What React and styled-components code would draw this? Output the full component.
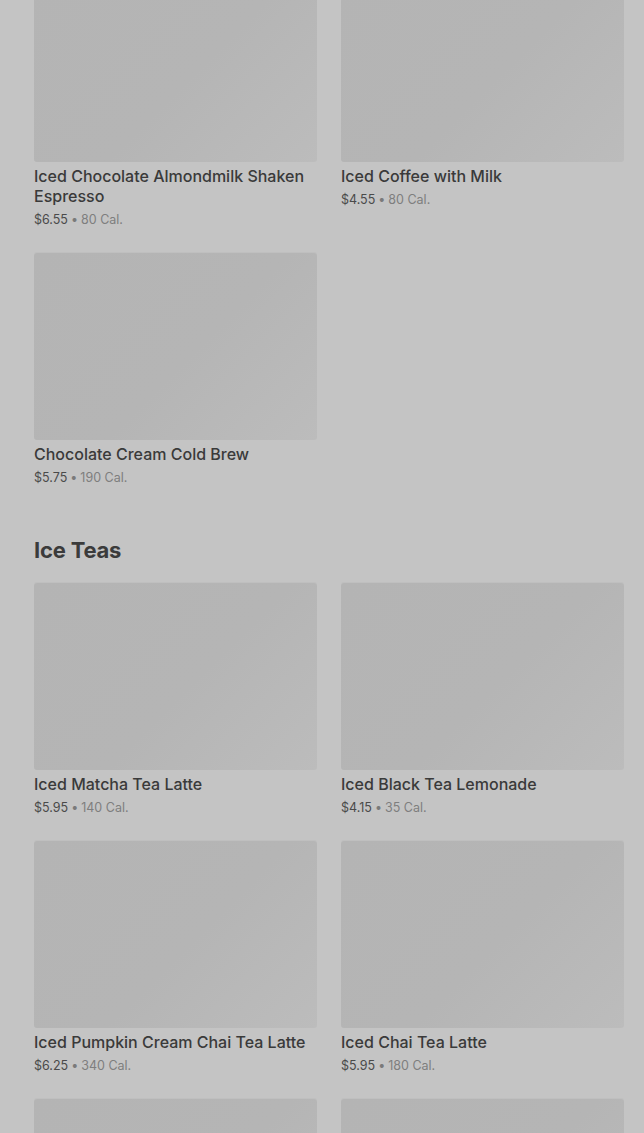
import React from 'react';
import styled, { createGlobalStyle } from 'styled-components';

const GlobalStyle = createGlobalStyle`
  html, body {
    margin: 0;
    padding: 0;
    background: #c4c4c4;
    font-family: Inter, Roboto, "Liberation Sans", sans-serif;
  }
  #root {
    height: 1133px;
    overflow: hidden;
  }
`;

const Page = styled.main`
  padding: 0 20px 0 34px;
  margin-top: -25px;
`;

const Section = styled.section`
  & + & {
    margin-top: 47px;
  }
`;

const Heading = styled.h2`
  margin: 0 0 17px;
  font-size: 22px;
  line-height: 32px;
  font-weight: 700;
  color: #3b3b3b;
  letter-spacing: -0.2px;
`;

const Grid = styled.div`
  display: grid;
  grid-template-columns: 283px 283px;
  column-gap: 24px;
  row-gap: 24px;
  align-items: start;
`;

const Card = styled.article`
  display: flex;
  flex-direction: column;
`;

const Thumb = styled.div`
  height: 187px;
  border-radius: 3px;
  background: linear-gradient(135deg, #b4b4b4 0%, #b5b5b5 55%, #bcbcbc 100%);
  box-shadow: 0 -1px 0 #bfbfbf;
`;

const Name = styled.h3`
  margin: 4px 0 0;
  font-size: 16px;
  line-height: 20px;
  font-weight: 500;
  color: #3a3a3a;
`;

const Meta = styled.p`
  margin: 5px 0 0;
  font-size: 12.5px;
  line-height: 18px;
  color: #4a4a4a;
`;

const Dot = styled.span`
  color: #7a7a7a;
  margin: 0 3px;
`;

const Cal = styled.span`
  color: #7e7e7e;
`;

const sections = [
  {
    title: null,
    items: [
      { name: 'Iced Chocolate Almondmilk Shaken Espresso', price: '$6.55', cal: '80 Cal.' },
      { name: 'Iced Coffee with Milk', price: '$4.55', cal: '80 Cal.' },
      { name: 'Chocolate Cream Cold Brew', price: '$5.75', cal: '190 Cal.' },
    ],
  },
  {
    title: 'Ice Teas',
    items: [
      { name: 'Iced Matcha Tea Latte', price: '$5.95', cal: '140 Cal.' },
      { name: 'Iced Black Tea Lemonade', price: '$4.15', cal: '35 Cal.' },
      { name: 'Iced Pumpkin Cream Chai Tea Latte', price: '$6.25', cal: '340 Cal.' },
      { name: 'Iced Chai Tea Latte', price: '$5.95', cal: '180 Cal.' },
      { name: 'Iced Green Tea', price: '$3.95', cal: '0 Cal.' },
      { name: 'Iced Peach Green Tea', price: '$4.45', cal: '60 Cal.' },
    ],
  },
];

function MenuCard({ item }) {
  return (
    <Card>
      <Thumb />
      <Name>{item.name}</Name>
      <Meta>
        {item.price}
        <Dot>•</Dot>
        <Cal>{item.cal}</Cal>
      </Meta>
    </Card>
  );
}

export default function App() {
  return (
    <>
      <GlobalStyle />
      <Page>
        {sections.map((section, i) => (
          <Section key={i}>
            {section.title && <Heading>{section.title}</Heading>}
            <Grid>
              {section.items.map((item) => (
                <MenuCard key={item.name} item={item} />
              ))}
            </Grid>
          </Section>
        ))}
      </Page>
    </>
  );
}
